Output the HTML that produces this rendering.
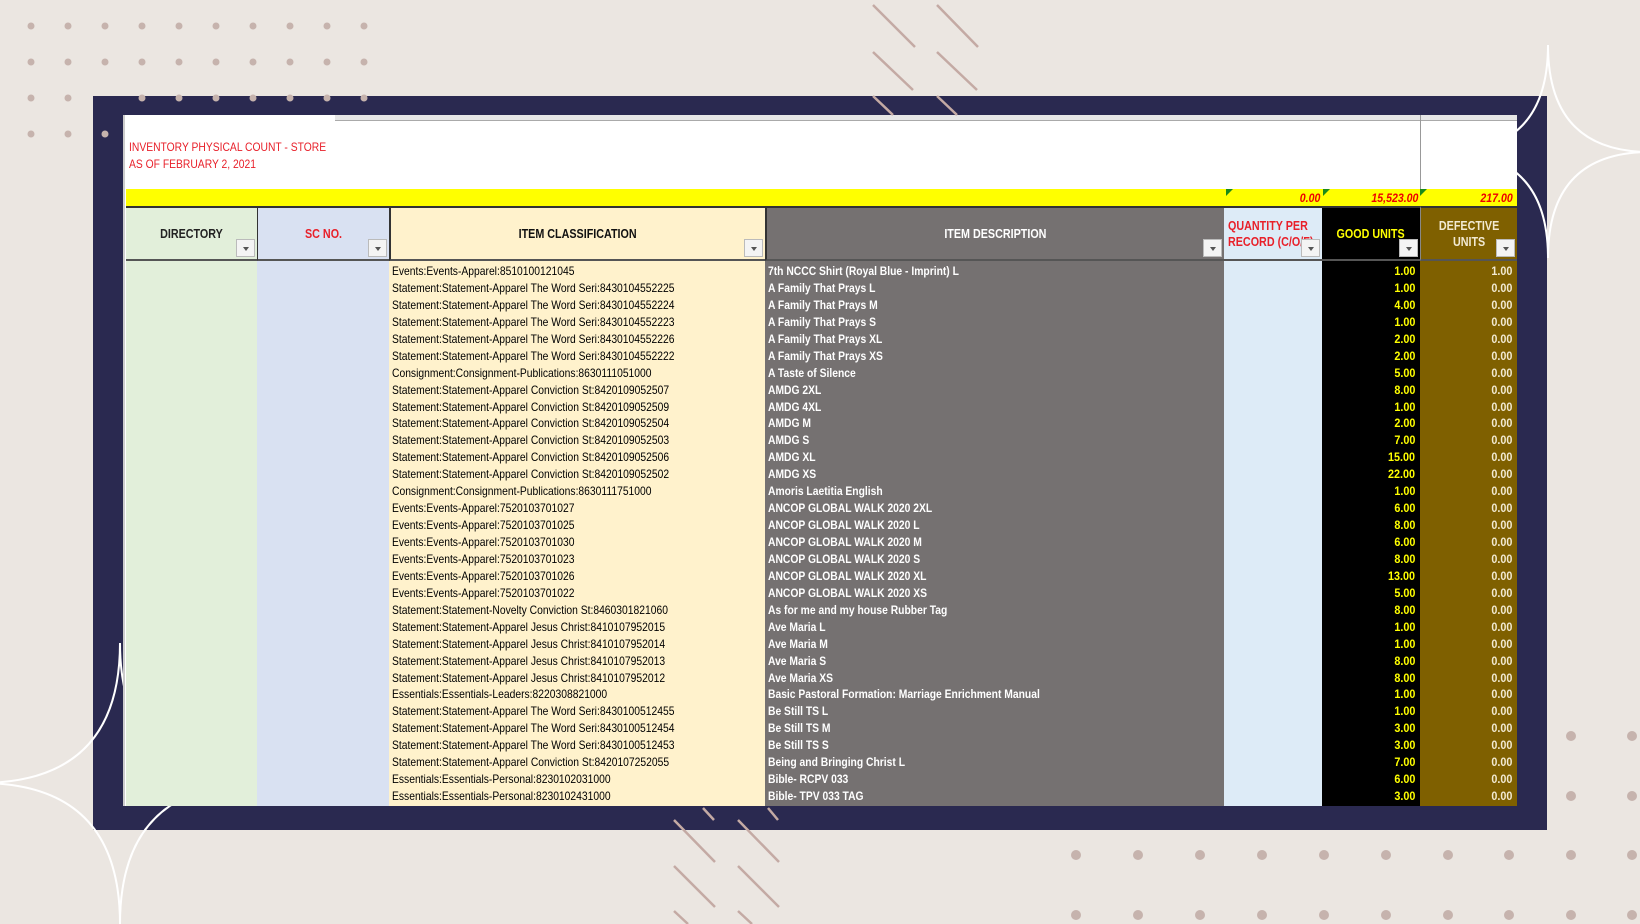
<!DOCTYPE html>
<html><head><meta charset="utf-8"><style>
*{margin:0;padding:0;box-sizing:border-box}
body{width:1640px;height:924px;background:#ebe6e1;position:relative;overflow:hidden;font-family:"Liberation Sans",sans-serif}
.abs{position:absolute}
.navy{left:93px;top:96px;width:1454px;height:734px;background:#2a2950}
.sheet{left:123px;top:115px;width:1394px;height:691px;background:#fff;overflow:hidden}
.col{position:absolute;top:92px;height:600px}
.hdr{position:absolute;top:91px;height:55px;border-top:2px solid #333;border-bottom:2px solid #555;display:flex;align-items:center;justify-content:center;text-align:center;font-weight:bold;font-size:12.5px;line-height:16px}
.hdr b{display:inline-block;transform:scaleX(.86);white-space:nowrap}
.fb{position:absolute;right:2px;bottom:2px;width:19px;height:18px;background:#f4f4f4;border:1px solid #bbb}
.fb:after{content:"";position:absolute;left:6px;top:7px;border-left:3px solid transparent;border-right:3px solid transparent;border-top:4px solid #555}
.rows{position:absolute;top:148px;left:0;width:1394px}
.r{height:16.94px;position:relative;font-size:12px;line-height:17px;white-space:nowrap}
.r span{position:absolute;top:0;display:block}
.c1{left:269px;transform:scaleX(.86);transform-origin:left}
.c2{left:645px;color:#fff;font-weight:bold;transform:scaleX(.86);transform-origin:left}
.c4{right:102px;color:#ff0;font-weight:bold;transform:scaleX(.9);transform-origin:right}
.c5{right:5px;color:#f2ead2;font-weight:bold;transform:scaleX(.9);transform-origin:right}
.yv{position:absolute;top:76px;font-style:italic;font-weight:bold;color:#e00;font-size:12px;transform:scaleX(.88);transform-origin:right}
.tri{position:absolute;top:74px;width:0;height:0;border-top:7px solid #1a8a1a;border-right:7px solid transparent}
</style></head><body>
<svg class="abs" style="left:0;top:0" width="400" height="150">
<g fill="#c6b3ad">
<circle cx="31" cy="26" r="3.5"/><circle cx="68" cy="26" r="3.5"/><circle cx="105" cy="26" r="3.5"/><circle cx="142" cy="26" r="3.5"/><circle cx="179" cy="26" r="3.5"/><circle cx="216" cy="26" r="3.5"/><circle cx="253" cy="26" r="3.5"/><circle cx="290" cy="26" r="3.5"/><circle cx="327" cy="26" r="3.5"/><circle cx="364" cy="26" r="3.5"/>
<circle cx="31" cy="62" r="3.5"/><circle cx="68" cy="62" r="3.5"/><circle cx="105" cy="62" r="3.5"/><circle cx="142" cy="62" r="3.5"/><circle cx="179" cy="62" r="3.5"/><circle cx="216" cy="62" r="3.5"/><circle cx="253" cy="62" r="3.5"/><circle cx="290" cy="62" r="3.5"/><circle cx="327" cy="62" r="3.5"/><circle cx="364" cy="62" r="3.5"/>
<circle cx="31" cy="98" r="3.5"/><circle cx="68" cy="98" r="3.5"/>
<circle cx="31" cy="134" r="3.5"/><circle cx="68" cy="134" r="3.5"/>
</g></svg>
<svg class="abs" style="left:1000px;top:700px" width="640" height="224" fill="#c6b3ad">
<circle cx="571" cy="36" r="5"/><circle cx="632" cy="36" r="5"/>
<circle cx="571" cy="96" r="5"/><circle cx="632" cy="96" r="5"/>
<circle cx="76" cy="155" r="5"/><circle cx="138" cy="155" r="5"/><circle cx="200" cy="155" r="5"/><circle cx="262" cy="155" r="5"/><circle cx="324" cy="155" r="5"/><circle cx="386" cy="155" r="5"/><circle cx="448" cy="155" r="5"/><circle cx="509" cy="155" r="5"/><circle cx="571" cy="155" r="5"/><circle cx="632" cy="155" r="5"/>
<circle cx="76" cy="215" r="5"/><circle cx="138" cy="215" r="5"/><circle cx="200" cy="215" r="5"/><circle cx="262" cy="215" r="5"/><circle cx="324" cy="215" r="5"/><circle cx="386" cy="215" r="5"/><circle cx="448" cy="215" r="5"/><circle cx="509" cy="215" r="5"/><circle cx="571" cy="215" r="5"/><circle cx="632" cy="215" r="5"/>
</svg>
<div class="abs navy"></div>
<svg class="abs" style="left:0;top:0" width="400" height="150"><g fill="#c6b3ad">
<circle cx="142" cy="98" r="3.5"/><circle cx="179" cy="98" r="3.5"/><circle cx="216" cy="98" r="3.5"/><circle cx="253" cy="98" r="3.5"/><circle cx="290" cy="98" r="3.5"/><circle cx="327" cy="98" r="3.5"/><circle cx="364" cy="98" r="3.5"/><circle cx="105" cy="134" r="3.5"/></g></svg>
<svg class="abs" style="left:0;top:0" width="1640" height="924">
<g stroke="#fff" stroke-width="2" fill="none">
<path d="M1548 45 Q1548 152 1650 152 Q1548 152 1548 258 Q1548 152 1446 152 Q1548 152 1548 45Z"/>
<path d="M120 643 Q120 783 -20 783 Q120 783 120 924"/>
<path d="M120 643 Q120 783 260 783"/>
<path d="M120 924 Q120 783 260 783"/>
</g>
</svg>
<div class="abs sheet">
 <div class="abs" style="left:212px;top:0;width:1182px;height:6px;background:#e6e6e6;border-bottom:1px solid #aaa"></div>
 <div class="abs" style="left:1297px;top:0;width:1px;height:76px;background:#999"></div>
 <div class="abs" style="left:0;top:0;width:2px;height:691px;background:#ccc"></div>
 <div class="abs" style="left:6px;top:24px;color:#e8202a;font-size:12px;line-height:17px;transform:scaleX(.86);transform-origin:left">INVENTORY PHYSICAL COUNT - STORE<br>AS OF FEBRUARY 2, 2021</div>
 <div class="abs" style="left:3px;top:74px;width:1391px;height:17px;background:#ff0"></div>
 <div class="tri" style="left:1103px"></div><div class="tri" style="left:1200px"></div><div class="tri" style="left:1297px"></div>
 <div class="yv" style="right:197px">0.00</div><div class="yv" style="right:99px">15,523.00</div><div class="yv" style="right:4px">217.00</div>
 <div class="col" style="left:3px;width:131px;background:#e2efda"></div>
 <div class="col" style="left:134px;width:132px;background:#d9e1f2"></div>
 <div class="col" style="left:266px;width:376px;background:#fff2cc"></div>
 <div class="col" style="left:642px;width:459px;background:#757171"></div>
 <div class="col" style="left:1101px;width:98px;background:#ddebf7"></div>
 <div class="col" style="left:1199px;width:98px;background:#000"></div>
 <div class="col" style="left:1297px;width:97px;background:#7f6000"></div>
 <div class="hdr" style="left:3px;width:131px;background:#e2efda;color:#222"><b>DIRECTORY</b><div class="fb"></div></div>
 <div class="hdr" style="left:134px;width:132px;background:#d9e1f2;color:#e8202a;border-left:1px solid #333"><b>SC NO.</b><div class="fb"></div></div>
 <div class="hdr" style="left:266px;width:376px;background:#fff2cc;color:#111;border-left:2px solid #333"><b>ITEM CLASSIFICATION</b><div class="fb"></div></div>
 <div class="hdr" style="left:642px;width:459px;background:#757171;color:#fff;border-left:2px solid #333"><b>ITEM DESCRIPTION</b><div class="fb"></div></div>
 <div class="hdr" style="left:1101px;width:98px;background:#ddebf7;color:#e8202a;justify-content:flex-start;padding-left:4px;text-align:left;overflow:hidden"><b style="transform-origin:left">QUANTITY PER<br>RECORD (C/O/F)</b><div class="fb"></div></div>
 <div class="hdr" style="left:1199px;width:98px;background:#000;color:#ff0"><b>GOOD UNITS</b><div class="fb"></div></div>
 <div class="hdr" style="left:1297px;width:97px;background:#7f6000;color:#f2ead2;border-left:1px solid #888"><b>DEFECTIVE<br>UNITS</b><div class="fb"></div></div>
 <div class="rows">
  <div class="r"><span class="c1">Events:Events-Apparel:8510100121045</span><span class="c2">7th NCCC Shirt (Royal Blue - Imprint) L</span><span class="c4">1.00</span><span class="c5">1.00</span></div>
  <div class="r"><span class="c1">Statement:Statement-Apparel The Word Seri:8430104552225</span><span class="c2">A Family That Prays L</span><span class="c4">1.00</span><span class="c5">0.00</span></div>
  <div class="r"><span class="c1">Statement:Statement-Apparel The Word Seri:8430104552224</span><span class="c2">A Family That Prays M</span><span class="c4">4.00</span><span class="c5">0.00</span></div>
  <div class="r"><span class="c1">Statement:Statement-Apparel The Word Seri:8430104552223</span><span class="c2">A Family That Prays S</span><span class="c4">1.00</span><span class="c5">0.00</span></div>
  <div class="r"><span class="c1">Statement:Statement-Apparel The Word Seri:8430104552226</span><span class="c2">A Family That Prays XL</span><span class="c4">2.00</span><span class="c5">0.00</span></div>
  <div class="r"><span class="c1">Statement:Statement-Apparel The Word Seri:8430104552222</span><span class="c2">A Family That Prays XS</span><span class="c4">2.00</span><span class="c5">0.00</span></div>
  <div class="r"><span class="c1">Consignment:Consignment-Publications:8630111051000</span><span class="c2">A Taste of Silence</span><span class="c4">5.00</span><span class="c5">0.00</span></div>
  <div class="r"><span class="c1">Statement:Statement-Apparel Conviction St:8420109052507</span><span class="c2">AMDG 2XL</span><span class="c4">8.00</span><span class="c5">0.00</span></div>
  <div class="r"><span class="c1">Statement:Statement-Apparel Conviction St:8420109052509</span><span class="c2">AMDG 4XL</span><span class="c4">1.00</span><span class="c5">0.00</span></div>
  <div class="r"><span class="c1">Statement:Statement-Apparel Conviction St:8420109052504</span><span class="c2">AMDG M</span><span class="c4">2.00</span><span class="c5">0.00</span></div>
  <div class="r"><span class="c1">Statement:Statement-Apparel Conviction St:8420109052503</span><span class="c2">AMDG S</span><span class="c4">7.00</span><span class="c5">0.00</span></div>
  <div class="r"><span class="c1">Statement:Statement-Apparel Conviction St:8420109052506</span><span class="c2">AMDG XL</span><span class="c4">15.00</span><span class="c5">0.00</span></div>
  <div class="r"><span class="c1">Statement:Statement-Apparel Conviction St:8420109052502</span><span class="c2">AMDG XS</span><span class="c4">22.00</span><span class="c5">0.00</span></div>
  <div class="r"><span class="c1">Consignment:Consignment-Publications:8630111751000</span><span class="c2">Amoris Laetitia English</span><span class="c4">1.00</span><span class="c5">0.00</span></div>
  <div class="r"><span class="c1">Events:Events-Apparel:7520103701027</span><span class="c2">ANCOP GLOBAL WALK 2020 2XL</span><span class="c4">6.00</span><span class="c5">0.00</span></div>
  <div class="r"><span class="c1">Events:Events-Apparel:7520103701025</span><span class="c2">ANCOP GLOBAL WALK 2020 L</span><span class="c4">8.00</span><span class="c5">0.00</span></div>
  <div class="r"><span class="c1">Events:Events-Apparel:7520103701030</span><span class="c2">ANCOP GLOBAL WALK 2020 M</span><span class="c4">6.00</span><span class="c5">0.00</span></div>
  <div class="r"><span class="c1">Events:Events-Apparel:7520103701023</span><span class="c2">ANCOP GLOBAL WALK 2020 S</span><span class="c4">8.00</span><span class="c5">0.00</span></div>
  <div class="r"><span class="c1">Events:Events-Apparel:7520103701026</span><span class="c2">ANCOP GLOBAL WALK 2020 XL</span><span class="c4">13.00</span><span class="c5">0.00</span></div>
  <div class="r"><span class="c1">Events:Events-Apparel:7520103701022</span><span class="c2">ANCOP GLOBAL WALK 2020 XS</span><span class="c4">5.00</span><span class="c5">0.00</span></div>
  <div class="r"><span class="c1">Statement:Statement-Novelty Conviction St:8460301821060</span><span class="c2">As for me and my house Rubber Tag</span><span class="c4">8.00</span><span class="c5">0.00</span></div>
  <div class="r"><span class="c1">Statement:Statement-Apparel Jesus Christ:8410107952015</span><span class="c2">Ave Maria L</span><span class="c4">1.00</span><span class="c5">0.00</span></div>
  <div class="r"><span class="c1">Statement:Statement-Apparel Jesus Christ:8410107952014</span><span class="c2">Ave Maria M</span><span class="c4">1.00</span><span class="c5">0.00</span></div>
  <div class="r"><span class="c1">Statement:Statement-Apparel Jesus Christ:8410107952013</span><span class="c2">Ave Maria S</span><span class="c4">8.00</span><span class="c5">0.00</span></div>
  <div class="r"><span class="c1">Statement:Statement-Apparel Jesus Christ:8410107952012</span><span class="c2">Ave Maria XS</span><span class="c4">8.00</span><span class="c5">0.00</span></div>
  <div class="r"><span class="c1">Essentials:Essentials-Leaders:8220308821000</span><span class="c2">Basic Pastoral Formation: Marriage Enrichment Manual</span><span class="c4">1.00</span><span class="c5">0.00</span></div>
  <div class="r"><span class="c1">Statement:Statement-Apparel The Word Seri:8430100512455</span><span class="c2">Be Still TS L</span><span class="c4">1.00</span><span class="c5">0.00</span></div>
  <div class="r"><span class="c1">Statement:Statement-Apparel The Word Seri:8430100512454</span><span class="c2">Be Still TS M</span><span class="c4">3.00</span><span class="c5">0.00</span></div>
  <div class="r"><span class="c1">Statement:Statement-Apparel The Word Seri:8430100512453</span><span class="c2">Be Still TS S</span><span class="c4">3.00</span><span class="c5">0.00</span></div>
  <div class="r"><span class="c1">Statement:Statement-Apparel Conviction St:8420107252055</span><span class="c2">Being and Bringing Christ L</span><span class="c4">7.00</span><span class="c5">0.00</span></div>
  <div class="r"><span class="c1">Essentials:Essentials-Personal:8230102031000</span><span class="c2">Bible- RCPV 033</span><span class="c4">6.00</span><span class="c5">0.00</span></div>
  <div class="r"><span class="c1">Essentials:Essentials-Personal:8230102431000</span><span class="c2">Bible- TPV 033 TAG</span><span class="c4">3.00</span><span class="c5">0.00</span></div>
 </div>
</div>
<svg class="abs" style="left:0;top:0" width="1640" height="924">
<g stroke="#c4aaa4" stroke-width="2.5" fill="none">
<line x1="873" y1="5" x2="915" y2="47"/><line x1="937" y1="5" x2="978" y2="47"/>
<line x1="873" y1="52" x2="913" y2="90"/><line x1="937" y1="52" x2="977" y2="90"/>
<line x1="873" y1="96" x2="893" y2="115"/><line x1="937" y1="96" x2="957" y2="115"/>
<line x1="703" y1="808" x2="714" y2="820"/><line x1="768" y1="808" x2="778" y2="820"/>
<line x1="674" y1="820" x2="715" y2="862"/><line x1="738" y1="820" x2="779" y2="862"/>
<line x1="674" y1="866" x2="715" y2="907"/><line x1="738" y1="866" x2="779" y2="907"/>
<line x1="674" y1="911" x2="688" y2="924"/><line x1="738" y1="911" x2="752" y2="924"/>
</g>
</svg>
</body></html>
